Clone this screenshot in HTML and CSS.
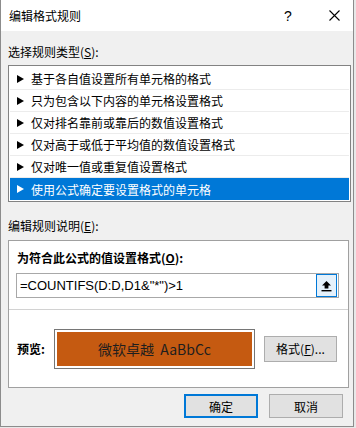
FILE: index.html
```html
<!DOCTYPE html>
<html lang="zh-CN">
<head>
  <meta charset="UTF-8">
  <meta name="viewport" content="width=device-width, initial-scale=1.0">
  <title>编辑格式规则</title>
  <link rel="stylesheet" href="styles.css">
</head>
<body>

  <div class="dialog">
    <div class="titlebar">
      <span class="title">编辑格式规则</span>
      <span class="title-btn help">?</span>
      <span class="title-btn close">
        <svg width="11" height="11" viewBox="0 0 11 11"><path d="M0.5 0.5L10.5 10.5M10.5 0.5L0.5 10.5" stroke="#000" stroke-width="1.1" fill="none"/></svg>
      </span>
    </div>

    <div class="content">
      <div class="label label-type">选择规则类型(<u>S</u>):</div>
      <ul class="rule-list">
        <li><span class="arrow"></span>基于各自值设置所有单元格的格式</li>
        <li><span class="arrow"></span>只为包含以下内容的单元格设置格式</li>
        <li><span class="arrow"></span>仅对排名靠前或靠后的数值设置格式</li>
        <li><span class="arrow"></span>仅对高于或低于平均值的数值设置格式</li>
        <li><span class="arrow"></span>仅对唯一值或重复值设置格式</li>
        <li class="selected"><span class="arrow"></span>使用公式确定要设置格式的单元格</li>
      </ul>

      <div class="label label-desc">编辑规则说明(<u>E</u>):</div>
      <div class="desc-box">
        <div class="desc-top">
          <div class="bold-label">为符合此公式的值设置格式(<u>O</u>):</div>
          <div class="formula">
            <span class="formula-text">=COUNTIFS(D:D,D1&amp;"*")&gt;1</span>
            <span class="ref-btn">
              <svg width="11" height="12" viewBox="0 0 11 12"><path d="M5.5 1L1 5.5H3.6V8.5H7.4V5.5H10Z" fill="#000"/><rect x="0.5" y="10" width="10" height="1.4" fill="#000"/></svg>
            </span>
          </div>
        </div>
        <div class="preview-row">
          <span class="bold-label">预览:</span>
          <div class="preview-box">
            <div class="preview-fill">微软卓越&nbsp; AaBbCc</div>
          </div>
          <button class="btn format-btn">格式(<u>F</u>)...</button>
        </div>
      </div>

      <div class="buttons">
        <button class="btn default-btn">确定</button>
        <button class="btn">取消</button>
      </div>
    </div>
  </div>

</body>
</html>
```

FILE: styles.css
```css
body {
  margin: 0;
  background-color: #e8e8e8;
  font-family: "Noto Sans CJK SC", "Noto Sans", sans-serif;
  font-size: 12px;
  color: #000;
}
.dialog {
  width: 352px;
  height: 426px;
  border: 1px solid #8c8c8c;
  border-top: none;
  background-color: #f0f0f0;
  box-sizing: content-box;
}
.titlebar {
  height: 31px;
  background-color: #fff;
  display: flex;
  align-items: center;
}
.title {
  flex: 1;
  padding-left: 8px;
  font-size: 12px;
}
.title-btn {
  height: 31px;
  display: flex;
  align-items: center;
  justify-content: center;
}
.help {
  width: 46px;
  margin-right: 4px;
  font-family: "Liberation Sans", sans-serif;
  font-size: 14px;
}
.close {
  width: 38px;
}
.content {
  padding-left: 7px;
}
.label {
  line-height: 16px;
}
.label-type {
  margin-top: 13px;
}
.rule-list {
  list-style: none;
  margin: 5px 0 0;
  padding: 2px 1px 1px;
  width: 339px;
  background-color: #fff;
  border: 1px solid #828282;
}
.rule-list li {
  height: 21px;
  border-bottom: 1px solid #ececec;
  display: flex;
  align-items: center;
  padding-left: 7px;
}
.rule-list li.selected {
  height: 22px;
  border-bottom: none;
  background-color: #0078d7;
  color: #fff;
}
.arrow {
  width: 0;
  height: 0;
  border-top: 4px solid transparent;
  border-bottom: 4px solid transparent;
  border-left: 7px solid #000;
  margin-right: 7px;
}
.selected .arrow {
  border-left-color: #fff;
}
.label-desc {
  margin-top: 16px;
}
.desc-box {
  margin-top: 6px;
  width: 339px;
  height: 146px;
  background-color: #fff;
  border: 1px solid #a0a0a0;
  display: flex;
  flex-direction: column;
}
.desc-top {
  padding: 9px 9px 0 7px;
  height: 69px;
  border-bottom: 1px solid #d2d2d2;
  box-sizing: border-box;
}
.bold-label {
  font-weight: bold;
  line-height: 16px;
  padding-left: 1px;
}
.formula {
  margin-top: 7px;
  height: 25px;
  width: 323px;
  border: 1px solid #a8a8a8;
  box-sizing: border-box;
  display: flex;
  align-items: center;
}
.formula-text {
  flex: 1;
  padding-left: 3px;
  font-family: "Liberation Sans", "Noto Sans", sans-serif;
  font-size: 13px;
}
.ref-btn {
  width: 21px;
  height: 23px;
  box-sizing: border-box;
  border: 1px solid #0078d7;
  background-color: #e5f1fb;
  display: flex;
  align-items: center;
  justify-content: center;
  margin-right: 1px;
}
.preview-row {
  flex: 1;
  display: flex;
  align-items: center;
  padding-left: 8px;
}
.preview-row .bold-label {
  width: 37px;
  padding-left: 0;
}
.preview-box {
  width: 201px;
  height: 40px;
  border: 1px solid #767676;
  padding: 2px;
  box-sizing: border-box;
  background-color: #fff;
}
.preview-fill {
  height: 100%;
  background-color: #c55a11;
  display: flex;
  align-items: center;
  justify-content: center;
  font-size: 14px;
  color: #1e1e1e;
}
.btn {
  font-family: "Noto Sans CJK SC", "Noto Sans", sans-serif;
  font-size: 12px;
  color: #000;
  background-color: #e1e1e1;
  border: 1px solid #adadad;
  padding: 0;
  margin: 0;
}
.format-btn {
  width: 73px;
  height: 26px;
  margin-left: 9px;
}
.buttons {
  display: flex;
  justify-content: flex-end;
  gap: 11px;
  margin-top: 6px;
  padding-right: 10px;
}
.buttons .btn {
  width: 74px;
  height: 24px;
}
.default-btn {
  border: 2px solid #0078d7;
}
```
